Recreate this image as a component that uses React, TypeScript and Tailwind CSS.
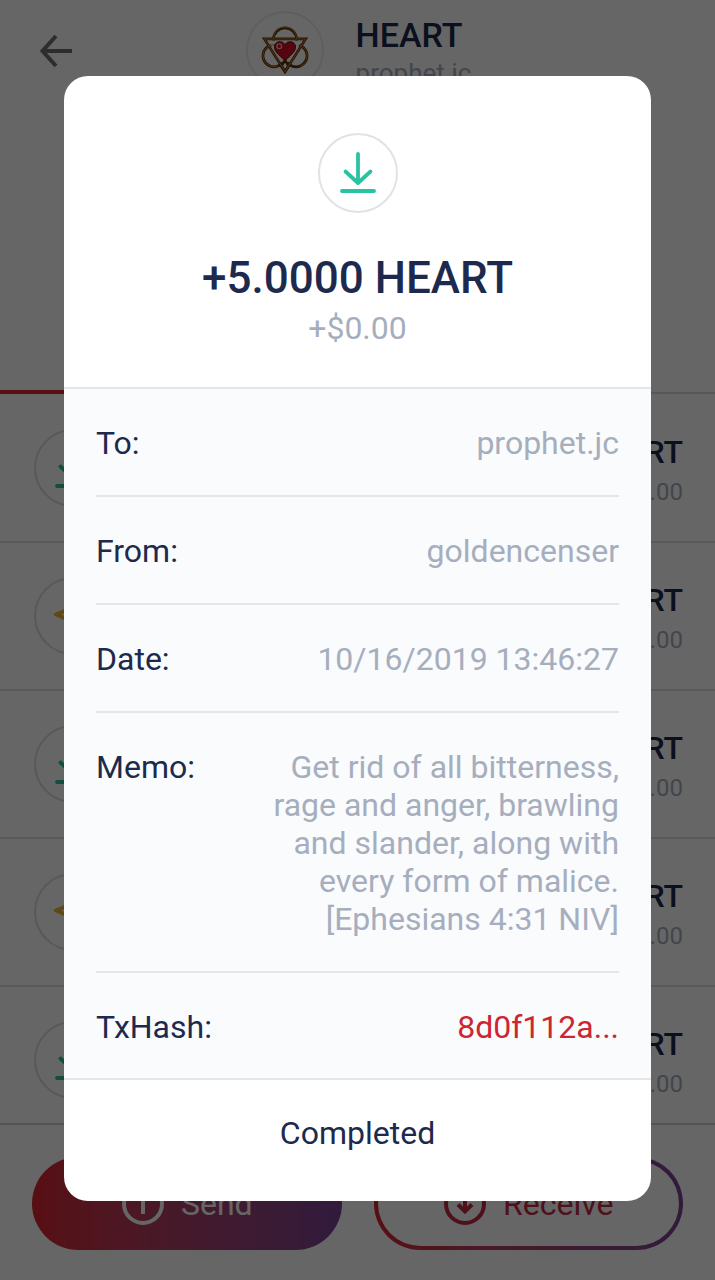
type Direction = "in" | "out";

const transfers: { id: number; direction: Direction }[] = [
  { id: 1, direction: "in" },
  { id: 2, direction: "out" },
  { id: 3, direction: "in" },
  { id: 4, direction: "out" },
  { id: 5, direction: "in" },
];

const details = [
  { label: "To:", value: "prophet.jc" },
  { label: "From:", value: "goldencenser" },
  { label: "Date:", value: "10/16/2019 13:46:27" },
  {
    label: "Memo:",
    value:
      "Get rid of all bitterness, rage and anger, brawling and slander, along with every form of malice. [Ephesians 4:31 NIV]",
  },
];

function IncomingIcon() {
  return (
    <svg
      viewBox="0 0 40 44"
      className="h-11 w-10"
      fill="none"
      stroke="#2ac3a2"
      strokeWidth="3.8"
      strokeLinecap="round"
      strokeLinejoin="round"
      aria-hidden="true"
    >
      <path d="M20 3v29M7.500 20.500 20 32l12.500-11.500M4 40h32" />
    </svg>
  );
}

function OutgoingIcon() {
  return (
    <svg
      viewBox="0 0 40 44"
      className="h-11 w-10"
      fill="none"
      stroke="#eeb32b"
      strokeWidth="4"
      strokeLinejoin="round"
      aria-hidden="true"
    >
      <path d="M36 7 3 20.500 15 25.500 20 37ZM36 7 15 25.500" />
    </svg>
  );
}

function HeartLogo() {
  return (
    <svg viewBox="0 0 50 50" className="size-12" aria-hidden="true">
      <g fill="none" stroke="#5a3208" strokeWidth="2.800">
        <circle cx="25" cy="14" r="12" />
        <circle cx="13.500" cy="31" r="11.500" />
        <circle cx="36.500" cy="31" r="11.500" />
      </g>
      <path d="M7 15h36L25 43Z" fill="#fff" />
      <g fill="none" stroke="#5a3208" strokeWidth="2.800">
        <path d="M3.500 13.500h43L25 47.500Z" />
        <path d="m25 36-4 5.500 4 6 4-6Z" />
      </g>
      <g fill="none" stroke="#c98a35" strokeWidth="1">
        <circle cx="13.500" cy="31" r="11.500" strokeDasharray="46 26" strokeDashoffset="-14" />
        <circle cx="36.500" cy="31" r="11.500" strokeDasharray="28 44" strokeDashoffset="14" />
        <path d="M13 13a12 12 0 0 1 24 0" />
        <path d="M3.500 13.500h43L25 47.500Z" />
      </g>
      <path
        d="M25 36C18 30 14 26 14 22c0-6.500 8.500-7.500 11-2.500 2.500-5 11-4 11 2.500 0 4-4 8-11 14Z"
        fill="#d80d24"
        stroke="#6c0510"
        strokeWidth="1"
      />
      <circle cx="19" cy="21" r="2.500" fill="none" stroke="#ffb3b8" strokeWidth="1.300" />
    </svg>
  );
}

function TransferRow({ direction }: { direction: Direction }) {
  return (
    <li className="flex h-[148px] shrink-0 items-center justify-between border-b-2 border-[#e1e2e5] pr-8 pl-[34px]">
      <span className="flex size-[78px] items-center justify-center rounded-full border-2 border-[#dcdde1]">
        {direction === "in" ? <IncomingIcon /> : <OutgoingIcon />}
      </span>
      <span className="flex flex-col items-end pt-2">
        <span className="text-[32px] leading-10 font-medium text-[#1d2a4d]">HEART</span>
        <span className="text-2xl leading-10 text-[#a6aebd]">$0.00</span>
      </span>
    </li>
  );
}

function AccountScreen() {
  return (
    <div className="flex h-screen flex-col overflow-hidden bg-white">
      <header className="grid h-[392px] shrink-0 grid-cols-[auto_1fr] items-start px-8 pt-[11px]">
        <button type="button" aria-label="Back" className="mt-4 flex size-12 items-center justify-center">
          <svg viewBox="0 0 36 36" className="size-9" fill="none" stroke="#707070" strokeWidth="4" aria-hidden="true">
            <path d="M18 3 4.500 18 18 33M5 18h29" />
          </svg>
        </button>
        <div className="flex justify-center gap-8 pr-[46px]">
          <span className="flex size-[78px] items-center justify-center rounded-full border-2 border-[#ececee]">
            <HeartLogo />
          </span>
          <div className="flex flex-col pt-1">
            <h1 className="text-[34px] leading-10 font-medium text-[#1d2a4d]">HEART</h1>
            <p className="text-[26px] leading-9 text-[#a6aebd]">prophet.jc</p>
          </div>
        </div>
      </header>
      <div className="flex h-0.5 shrink-0 items-end bg-[#d9dade]">
        <div className="h-1 w-1/2 bg-[#dc2430]" />
      </div>
      <ul className="flex min-h-0 flex-1 flex-col overflow-hidden pt-px">
        {transfers.map((t) => (
          <TransferRow key={t.id} direction={t.direction} />
        ))}
      </ul>
      <footer className="grid shrink-0 grid-cols-2 gap-8 border-t-2 border-[#cfd0d4] px-8 pt-8 pb-[30px] text-[32px]">
        <button
          type="button"
          className="flex h-[93px] items-center justify-center gap-4 rounded-full bg-linear-to-r from-[#dc2430] to-[#7b4397] text-white"
        >
          <svg viewBox="0 0 44 44" className="size-11" fill="none" stroke="currentColor" strokeWidth="4" aria-hidden="true">
            <circle cx="22" cy="22" r="19" />
            <path d="M22 32V12M15.500 17l6.500-6.500 6.500 6.500" />
          </svg>
          Send
        </button>
        <button
          type="button"
          className="flex h-[93px] rounded-full bg-linear-to-r from-[#dc2430] to-[#7b4397] p-1 text-[#c22a45]"
        >
          <span className="flex h-full w-full items-center justify-center gap-4 rounded-full bg-white">
            <svg viewBox="0 0 44 44" className="size-11" fill="none" stroke="currentColor" strokeWidth="4" aria-hidden="true">
              <circle cx="22" cy="22" r="19" />
              <path d="M22 11v18M15 22.500l7 7 7-7" />
            </svg>
            Receive
          </span>
        </button>
      </footer>
    </div>
  );
}

function TransferDialog() {
  return (
    <div className="fixed inset-0 flex items-center justify-center bg-black/60 px-16 pb-[3px]">
      <section
        role="dialog"
        aria-modal="true"
        aria-labelledby="transfer-amount"
        className="w-full overflow-hidden rounded-3xl bg-white text-[32px] leading-[38px] text-[#1d2a4d]"
      >
        <div className="flex flex-col items-center border-b-2 border-[#e3e5e9] pt-[57px] pb-10">
          <span className="flex size-20 items-center justify-center rounded-full border-2 border-[#e0e2e6]">
            <IncomingIcon />
          </span>
          <h2 id="transfer-amount" className="mt-[39px] text-[44px] leading-[52px] font-medium">
            +5.0000 HEART
          </h2>
          <p className="mt-[5px] text-[#a6aebd]">+$0.00</p>
        </div>
        <dl className="bg-[#f9fbfd] px-8">
          {details.map((d) => (
            <div key={d.label} className="flex justify-between border-b-2 border-[#e3e5e9] pt-[35px] pb-[33px]">
              <dt>{d.label}</dt>
              <dd className="max-w-[350px] text-right text-[#a6aebd]">{d.value}</dd>
            </div>
          ))}
          <div className="flex justify-between pt-[35px] pb-8">
            <dt>TxHash:</dt>
            <dd>
              <a href="#tx" className="text-[#cf2531]">
                8d0f112a...
              </a>
            </dd>
          </div>
        </dl>
        <p className="border-t-2 border-[#e3e5e9] pt-[34px] pb-[49px] text-center">Completed</p>
      </section>
    </div>
  );
}

export default function App() {
  return (
    <main className="font-[Roboto,sans-serif]">
      <AccountScreen />
      <TransferDialog />
    </main>
  );
}
